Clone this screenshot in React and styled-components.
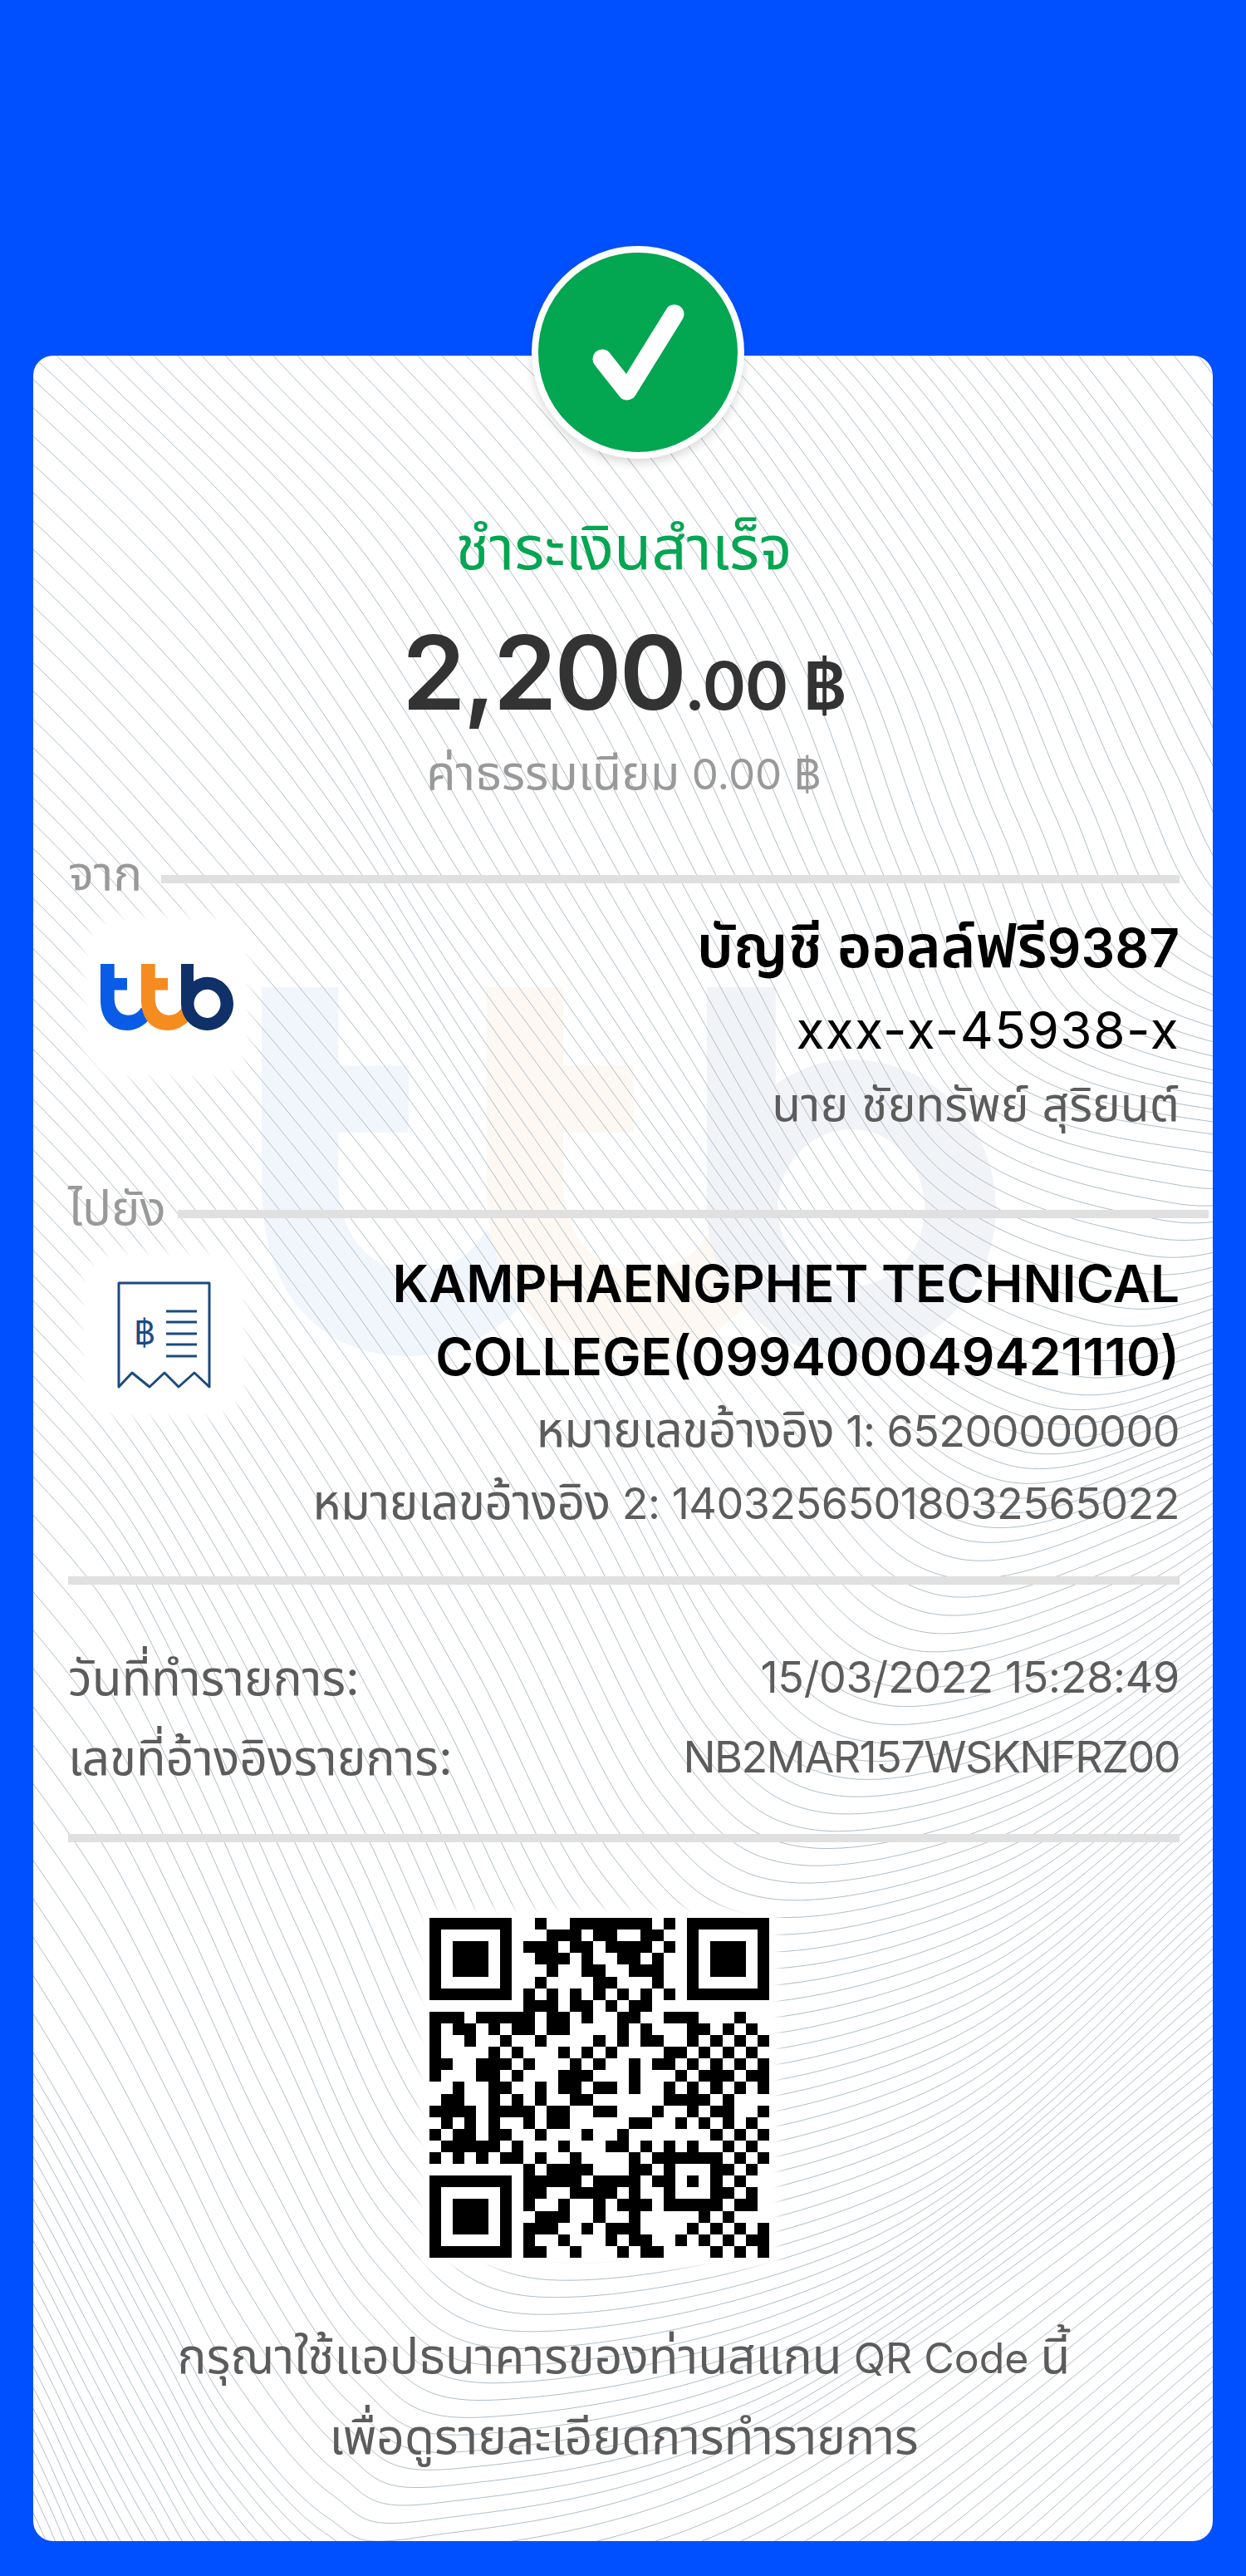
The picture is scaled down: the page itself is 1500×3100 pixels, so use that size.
import React from "react";
import styled, { createGlobalStyle } from "styled-components";

const GlobalStyle = createGlobalStyle`
  html, body { margin: 0; padding: 0; background: #0050ff; }
  body { font-family: Inter, "Noto Sans", "Noto Sans Thai", "Liberation Sans", sans-serif; }
`;

const Page = styled.div`
  width: 1500px;
  height: 3100px;
  box-sizing: border-box;
  padding: 428px 40px 0;
  background: #0050ff;
`;

const Card = styled.main`
  position: relative;
  box-sizing: border-box;
  height: 2630px;
  padding: 190px 40px 0 42px;
  background: #fff;
  border-radius: 24px;
`;

const Pattern = styled.div`
  position: absolute;
  inset: 0;
  overflow: hidden;
  border-radius: 24px;
`;

const PatternSvg = styled.svg`
  display: block;
  width: 100%;
  height: 100%;
`;

const Badge = styled.div`
  position: absolute;
  top: -132px;
  left: 600px;
  width: 240px;
  height: 240px;
  display: flex;
  align-items: center;
  justify-content: center;
  border: 8px solid #fff;
  border-radius: 50%;
  background: #03a651;
  box-shadow: 0 6px 12px rgba(0, 0, 0, 0.14);
`;

const Content = styled.div`
  position: relative;
`;

const Th = styled.span`
  font-size: ${(p) => p.$size}px;
`;

const Title = styled.h1`
  margin: 0;
  font-size: 74px;
  font-weight: 400;
  line-height: 80px;
  color: #03a651;
  text-align: center;
`;

const Amount = styled.div`
  margin-top: 47px;
  height: 130px;
  display: flex;
  align-items: baseline;
  justify-content: center;
  line-height: 130px;
  color: #333;
`;

const Whole = styled.span`
  font-size: 123px;
  font-weight: 600;
  letter-spacing: -3px;
`;

const Cents = styled.span`
  font-size: 80px;
  font-weight: 600;
  letter-spacing: -1.5px;
`;

const Fee = styled.p`
  margin: 14px 0 0;
  font-size: 51px;
  line-height: 80px;
  color: #999;
  text-align: center;
`;

const SectionHead = styled.div`
  display: flex;
  align-items: center;
  gap: ${(p) => p.$gap}px;
  height: 60px;
  margin-top: ${(p) => p.$top}px;
  margin-right: ${(p) => p.$bleed || 0}px;
`;

const SectionLabel = styled.span`
  margin-bottom: 16px;
  font-size: 58px;
  line-height: 60px;
  color: #999;
`;

const Rule = styled.div`
  flex: 1;
  height: 10px;
  margin-top: ${(p) => p.$top || 0}px;
  background: #e0e0e0;
`;

const Party = styled.section`
  display: flex;
  justify-content: space-between;
  margin-top: ${(p) => p.$top}px;
`;

const MarkCell = styled.div`
  flex: none;
  display: flex;
  align-items: center;
  justify-content: center;
  width: 190px;
  height: ${(p) => p.$h}px;
  margin: ${(p) => p.$mt}px 0 0 ${(p) => p.$ml}px;
  background: #fff;
  border-radius: 40px;
  box-shadow: 0 0 14px 6px #fff;
`;

const PartyText = styled.div`
  flex: 1;
  text-align: right;
`;

const Name = styled.div`
  font-size: ${(p) => p.$size}px;
  font-weight: 600;
  line-height: ${(p) => p.$lh}px;
  color: #000;
`;

const Account = styled.div`
  margin-top: 6px;
  font-size: 62px;
  line-height: 90px;
  letter-spacing: 1.5px;
  color: #000;
`;

const Sub = styled.div`
  margin-top: ${(p) => p.$top || 0}px;
  font-size: ${(p) => p.$size}px;
  line-height: ${(p) => p.$lh}px;
  letter-spacing: ${(p) => p.$track || 0}px;
  color: #5c5c5c;
`;

const Info = styled.div`
  margin-top: 64px;
`;

const InfoRow = styled.div`
  display: flex;
  justify-content: space-between;
  font-size: 52px;
  line-height: 96px;
  color: #5c5c5c;
`;

const Stamp = styled.span`
  letter-spacing: -0.3px;
`;

const RefCode = styled.span`
  letter-spacing: -1.5px;
`;

const QrFrame = styled.div`
  width: 409px;
  height: 409px;
  margin: 91px 0 0 435px;
  background: #fff;
  box-shadow: 0 0 10px 12px #fff;
`;

const Note = styled.p`
  margin: 71px 0 0;
  font-size: 50px;
  line-height: 93px;
  color: #5c5c5c;
  text-align: center;
`;

// guide curves traced off the reference, the lines between them are interpolated
// each guide: off-card start, edge crossing, three mid points, knee, vertex, rise, right edge, off-card end
const GUIDES = [
  [-8, [[1380,270],[1530,430],[1690,650],[1770,770],[1830,860],[1890,950],[2030,1040],[2180,1040],[2330,1000],[2480,900]]],
  [0, [[1150,270],[1300,430],[1460,650],[1540,770],[1600,860],[1660,950],[1800,1040],[1950,1040],[2100,1000],[2250,900]]],
  [25, [[500,270],[735,428],[900,640],[1000,820],[1080,1040],[1200,1290],[1460,1365],[1600,1350],[1750,1300],[1950,1200]]],
  [40, [[150,250],[300,428],[500,640],[640,860],[790,1130],[1030,1520],[1267,1673],[1460,1640],[1600,1570],[1800,1430]]],
  [50, [[-120,320],[48,464],[235,650],[390,860],[560,1130],[950,1640],[1150,1850],[1400,1790],[1600,1670],[1800,1520]]],
  [63, [[-100,800],[40,900],[250,1130],[500,1430],[720,1750],[880,2040],[1020,2140],[1250,2090],[1460,1951],[1700,1750]]],
  [92, [[-60,1680],[40,1777],[140,1900],[240,2100],[350,2350],[480,2620],[670,2744],[1100,2640],[1460,2330],[1700,2100]]],
  [107, [[-50,2330],[40,2470],[120,2610],[200,2760],[277,2900],[392,3028],[507,3053],[900,2950],[1460,2560],[1700,2340]]],
  [132, [[-60,2900],[40,3100],[90,3220],[150,3330],[220,3420],[350,3520],[520,3560],[1000,3420],[1460,3010],[1700,2790]]],
];

function linePath(pts) {
  let d = `M${pts[0][0]} ${pts[0][1]}`;
  for (let i = 0; i < pts.length - 1; i++) {
    const p0 = pts[Math.max(i - 1, 0)];
    const p1 = pts[i];
    const p2 = pts[i + 1];
    const p3 = pts[Math.min(i + 2, pts.length - 1)];
    const c1 = [p1[0] + (p2[0] - p0[0]) / 6, p1[1] + (p2[1] - p0[1]) / 6];
    const c2 = [p2[0] - (p3[0] - p1[0]) / 6, p2[1] - (p3[1] - p1[1]) / 6];
    d += `C${c1[0].toFixed(1)} ${c1[1].toFixed(1)} ${c2[0].toFixed(1)} ${c2[1].toFixed(1)} ${p2[0].toFixed(1)} ${p2[1].toFixed(1)}`;
  }
  return d;
}

function buildLines() {
  const out = [];
  for (let g = 0; g < GUIDES.length - 1; g++) {
    const [from, a] = GUIDES[g];
    const [to, b] = GUIDES[g + 1];
    for (let i = from; i < to; i++) {
      const t = (i - from) / (to - from);
      out.push(linePath(a.map((p, k) => [p[0] + (b[k][0] - p[0]) * t, p[1] + (b[k][1] - p[1]) * t])));
    }
  }
  return out.join("");
}

const QR_ROWS = [
  "0-6,9,12-18,20,22-28",
  "0,6,10-12,14-15,18-19,22,28",
  "0,2-4,6,8-10,12-13,15-18,20,22,24-26,28",
  "0,2-4,6,9-11,13,16-17,19,22,24-26,28",
  "0,2-4,6,10,13-14,17-19,22,24-26,28",
  "0,6,9,14-15,19,22,28",
  "0-6,8,10,12,14,16,18,20,22-28",
  "8-10,12-13,15,17-18",
  "0-2,4-8,10-11,13,16-17,20-22,26",
  "0,2-3,5,7-8,10-11,16,18,22-23,25,27",
  "0,3,6,9,14,16,18-19,22,24,26,28",
  "0,5,7,11,13,15,20-21,23,25,27",
  "0-1,4-6,8,12,14,17,19-20,22,24,26,28",
  "0,4-5,7,11-13,17,21,23-25,27-28",
  "2,5-6,9,11-12,14-15,17,20,22,24,26,28",
  "1-2,5,7,9,12-13,20-23,25",
  "0-3,5-8,10-11,14-15,19,22,24-25,28",
  "1,3,5,8,10-11,17-18,21,23,25,27",
  "0,2-3,5-6,9,13,16,24,26,28",
  "1-5,7,11,15-16,18,20,22,25,27",
  "0,2,4,6-7,9,12,17,19-24,26,28",
  "8,10-13,17-18,20,24-25,27",
  "0-6,8-12,14-17,19-20,22,24,26",
  "0,6,8-9,12-15,17,20,24-25,27",
  "0,2-4,6,8,11,14,16-18,20-24,26-27",
  "0,2-4,6,9-11,14,17,23,25",
  "0,2-4,6,8-10,13,15-17,22,24,26,28",
  "0,6,8,11,15,17-18,21,23,25,27-28",
  "0-6,8-9,12,16,18-19,24,26,28",
];

const qrPath = QR_ROWS.map((row, y) =>
  row.split(",").map((run) => {
    const [a, b = a] = run.split("-").map(Number);
    return `M${a} ${y}h${b - a + 1}v1h${-(b - a + 1)}z`;
  }).join("")
).join("");

const T_SHAPE = "M0 0H16.7V13H32V24H16.7V32C16.7 42 25 47 33 47C40 47 45 45 49 40L60 50C52 57 43 61 32 61C12 61 0 50 0 33Z";
const B_SHAPE = "M97 0H112V16C117 13.5 122 12 128.5 12C146 12 160 23 160 36.5C160 50 146 61 128.5 61C111 61 97 50 97 36.5ZM112.5 36.5C112.5 43.7 119.7 49.5 128.5 49.5C137.3 49.5 144.5 43.7 144.5 36.5C144.5 29.3 137.3 23.5 128.5 23.5C119.7 23.5 112.5 29.3 112.5 36.5Z";

function TtbShapes() {
  return (
    <>
      <path d={T_SHAPE} fill="#0a5ce6" />
      <path d={T_SHAPE} fill="#f68b1f" transform="translate(49 0)" />
      <path d={B_SHAPE} fill="#0f3068" fillRule="evenodd" />
    </>
  );
}

function ReceiptIcon() {
  return (
    <svg width="113" height="129" viewBox="-1 -1 113 129" fill="none" stroke="#1c4a80">
      <path d="M1 1H110V126L92 109L73 126L56 109L38 126L17 109L1 126Z" strokeWidth="3" strokeLinejoin="round" />
      <path d="M58 35H95M58 48H95M58 62H95M58 75H95M58 89H95" strokeWidth="3" />
      <text x="32" y="75" fontSize="40" fontFamily="Inter, sans-serif" textAnchor="middle" fill="#1c4a80" stroke="none">฿</text>
    </svg>
  );
}

export default function App() {
  return (
    <Page>
      <GlobalStyle />
      <Card>
        <Pattern>
          <PatternSvg viewBox="40 428 1420 2630">
            <svg x="315" y="1188" width="884" height="444" viewBox="0 0 160 61" preserveAspectRatio="none" opacity="0.05">
              <TtbShapes />
            </svg>
            <path d={buildLines()} fill="none" stroke="#aebec8" strokeWidth="1" />
          </PatternSvg>
        </Pattern>
        <Badge>
          <svg width="240" height="240" viewBox="0 0 240 240" fill="none">
            <path d="M77 128L107 166L164 74" stroke="#fff" strokeWidth="23" strokeLinecap="round" strokeLinejoin="round" />
          </svg>
        </Badge>
        <Content>
          <Title>ชำระเงินสำเร็จ</Title>
          <Amount>
            <Whole>2,200</Whole>
            <Cents>.00 ฿</Cents>
          </Amount>
          <Fee><Th $size={58}>ค่าธรรมเนียม</Th> 0.00 ฿</Fee>

          <SectionHead $gap={23} $top={56}>
            <SectionLabel>จาก</SectionLabel>
            <Rule />
          </SectionHead>
          <Party $top={2}>
            <MarkCell $h={186} $mt={17} $ml={24}>
              <svg width="160" height="80" viewBox="0 0 160 61" preserveAspectRatio="none">
                <TtbShapes />
              </svg>
            </MarkCell>
            <PartyText>
              <Name $size={64} $lh={96}><Th $size={71}>บัญชี ออลล์ฟรี</Th>9387</Name>
              <Account>xxx-x-45938-x</Account>
              <Sub $size={57} $lh={88}>นาย ชัยทรัพย์ สุริยนต์</Sub>
            </PartyText>
          </Party>

          <SectionHead $gap={14} $top={58} $bleed={-35}>
            <SectionLabel>ไปยัง</SectionLabel>
            <Rule />
          </SectionHead>
          <Party $top={10}>
            <MarkCell $h={190} $mt={10} $ml={20}>
              <ReceiptIcon />
            </MarkCell>
            <PartyText>
              <Name $size={62} $lh={88}>KAMPHAENGPHET TECHNICAL<br />COLLEGE(099400049421110)</Name>
              <Sub $size={52} $lh={84} $top={1} $track={-0.5}><Th $size={58.5}>หมายเลขอ้างอิง</Th> 1: 65200000000</Sub>
              <Sub $size={52} $lh={84} $track={-0.5}><Th $size={58.5}>หมายเลขอ้างอิง</Th> 2: 14032565018032565022</Sub>
            </PartyText>
          </Party>

          <Rule $top={45} />
          <Info>
            <InfoRow><Th $size={58.5}>วันที่ทำรายการ:</Th><Stamp>15/03/2022 15:28:49</Stamp></InfoRow>
            <InfoRow><Th $size={58.5}>เลขที่อ้างอิงรายการ:</Th><RefCode>NB2MAR157WSKNFRZ00</RefCode></InfoRow>
          </Info>
          <Rule $top={44} />

          <QrFrame>
            <svg width="409" height="409" viewBox="0 0 29 29" shapeRendering="crispEdges">
              <path d={qrPath} fill="#000" />
            </svg>
          </QrFrame>
          <Note>
            <Th $size={58.5}>กรุณาใช้แอปธนาคารของท่านสแกน</Th> QR Code <Th $size={58.5}>นี้</Th><br />
            <Th $size={58.5}>เพื่อดูรายละเอียดการทำรายการ</Th>
          </Note>
        </Content>
      </Card>
    </Page>
  );
}
